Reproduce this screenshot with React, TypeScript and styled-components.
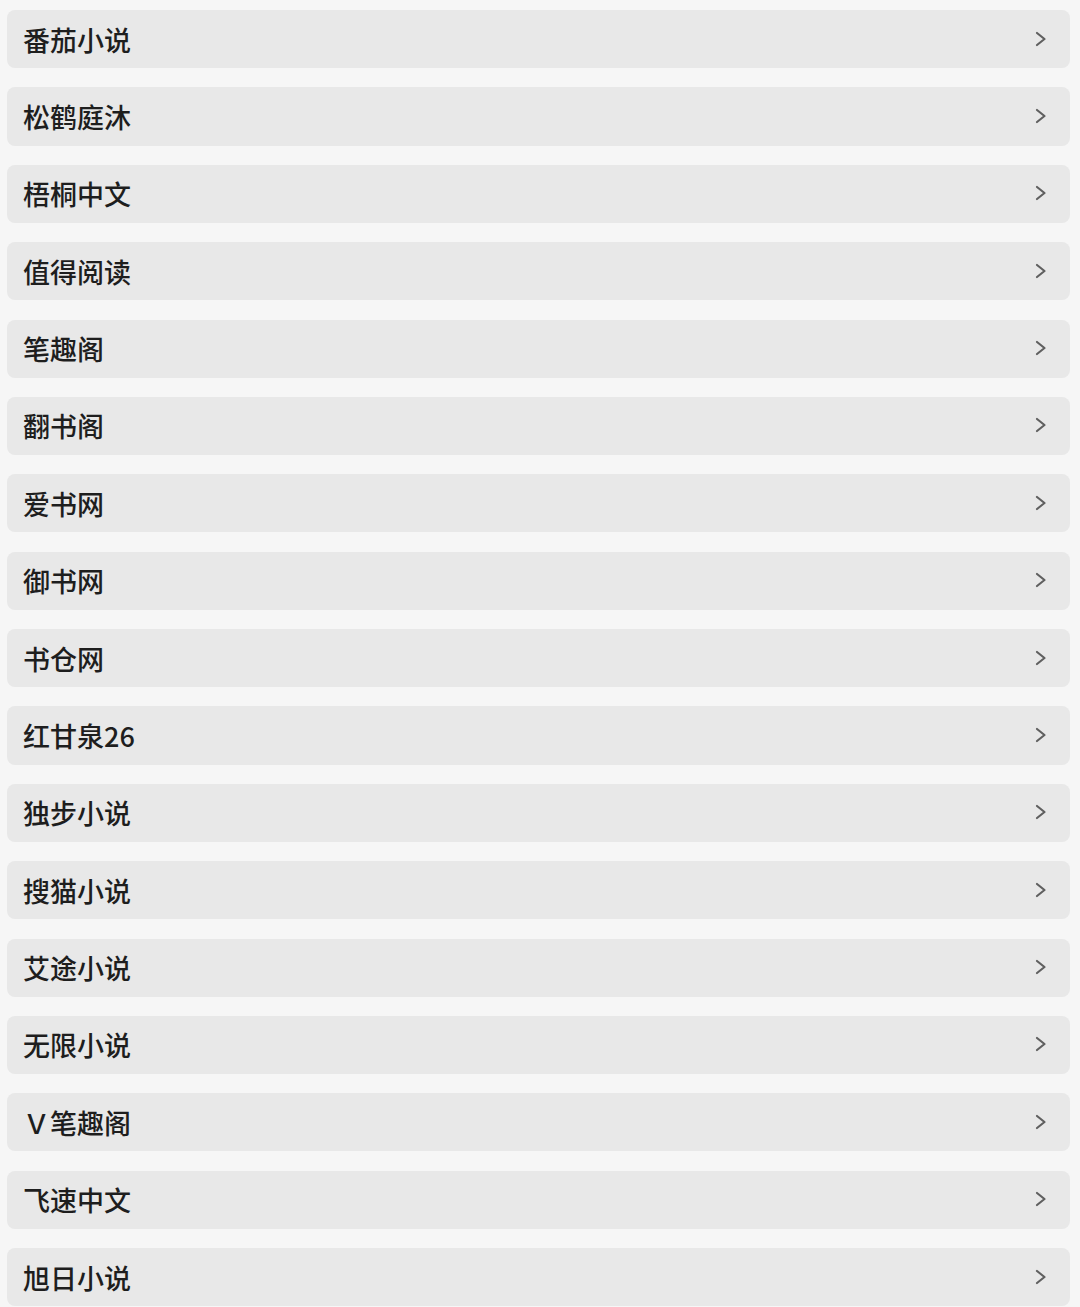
import React from "react";
import styled, { createGlobalStyle } from "styled-components";

const GlobalStyle = createGlobalStyle`
  html, body {
    margin: 0;
    padding: 0;
    background: #f6f6f6;
  }
  body {
    font-family: "Noto Sans CJK SC", "Noto Sans", sans-serif;
  }
`;

const List = styled.div`
  display: flex;
  flex-direction: column;
  gap: 19.2px;
  padding: 10px 10px 0 7px;
`;

const Row = styled.div`
  display: flex;
  align-items: center;
  justify-content: space-between;
  height: 58.2px;
  padding: 0 22px 0 16px;
  background: #e8e8e8;
  border-radius: 8px;
  flex-shrink: 0;
`;

const Label = styled.span`
  font-size: 27px;
  font-weight: 500;
  color: #1e1e1e;
  letter-spacing: 0;
  line-height: 1;
`;

const Chevron = styled.svg`
  width: 14px;
  height: 17px;
  flex-shrink: 0;
`;

const items = [
  "番茄小说",
  "松鹤庭沐",
  "梧桐中文",
  "值得阅读",
  "笔趣阁",
  "翻书阁",
  "爱书网",
  "御书网",
  "书仓网",
  "红甘泉26",
  "独步小说",
  "搜猫小说",
  "艾途小说",
  "无限小说",
  "Ｖ笔趣阁",
  "飞速中文",
  "旭日小说",
];

export default function App() {
  return (
    <>
      <GlobalStyle />
      <List>
        {items.map((name) => (
          <Row key={name}>
            <Label>{name}</Label>
            <Chevron viewBox="0 0 14 17" fill="none">
              <path
                d="M3 2 L10.5 8 L3 14"
                stroke="#606060"
                strokeWidth="2.2"
                strokeLinecap="round"
                strokeLinejoin="round"
              />
            </Chevron>
          </Row>
        ))}
      </List>
    </>
  );
}
